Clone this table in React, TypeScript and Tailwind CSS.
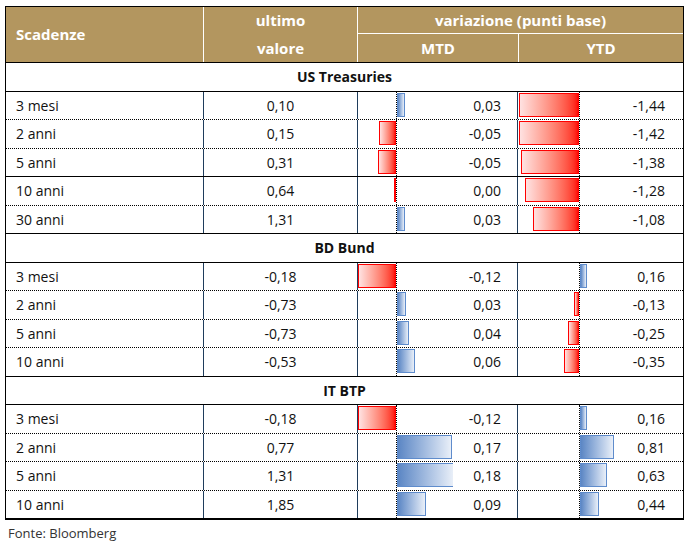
import React from "react";

type Row = {
  label: string;
  last: string;
  mtd: string;
  mtdW: number; // px, negative = red bar to the left of the axis
  ytd: string;
  ytdW: number;
  solid?: boolean;
  noEdge?: boolean;
};

type Group = { name: string; rows: Row[] };

const groups: Group[] = [
  {
    name: "US Treasuries",
    rows: [
      { label: "3 mesi", last: "0,10", mtd: "0,03", mtdW: 8, ytd: "-1,44", ytdW: -60 },
      { label: "2 anni", last: "0,15", mtd: "-0,05", mtdW: -17, ytd: "-1,42", ytdW: -60 },
      { label: "5 anni", last: "0,31", mtd: "-0,05", mtdW: -18, ytd: "-1,38", ytdW: -58, solid: true },
      { label: "10 anni", last: "0,64", mtd: "0,00", mtdW: -1, ytd: "-1,28", ytdW: -54 },
      { label: "30 anni", last: "1,31", mtd: "0,03", mtdW: 8, ytd: "-1,08", ytdW: -46 },
    ],
  },
  {
    name: "BD Bund",
    rows: [
      { label: "3 mesi", last: "-0,18", mtd: "-0,12", mtdW: -38, ytd: "0,16", ytdW: 7 },
      { label: "2 anni", last: "-0,73", mtd: "0,03", mtdW: 9, ytd: "-0,13", ytdW: -5 },
      { label: "5 anni", last: "-0,73", mtd: "0,04", mtdW: 12, ytd: "-0,25", ytdW: -11 },
      { label: "10 anni", last: "-0,53", mtd: "0,06", mtdW: 18, ytd: "-0,35", ytdW: -15 },
    ],
  },
  {
    name: "IT BTP",
    rows: [
      { label: "3 mesi", last: "-0,18", mtd: "-0,12", mtdW: -38, ytd: "0,16", ytdW: 7 },
      { label: "2 anni", last: "0,77", mtd: "0,17", mtdW: 55, ytd: "0,81", ytdW: 34 },
      { label: "5 anni", last: "1,31", mtd: "0,18", mtdW: 56, ytd: "0,63", ytdW: 27, noEdge: true },
      { label: "10 anni", last: "1,85", mtd: "0,09", mtdW: 29, ytd: "0,44", ytdW: 19 },
    ],
  },
];

// One variation cell: red bars grow left of the dotted axis, blue ones right.
function BarCell({ value, w, negSlot, pr, noEdge }: { value: string; w: number; negSlot: string; pr: string; noEdge?: boolean }) {
  return (
    <div className="flex h-full flex-1 items-stretch border-l border-[#1f3d5c]">
      <div className={`flex ${negSlot} shrink-0 items-start justify-end pt-px`}>
        {w < 0 && (
          <div
            className="h-[24px] border border-[#ff0000] bg-linear-to-r from-[#ffe2e2] to-[#ff0000]"
            style={{ width: -w }}
          />
        )}
      </div>
      <div className="border-l border-dotted border-black" />
      <div className="flex flex-1 items-start pt-px">
        {w > 0 && (
          <div
            className={`h-[24px] border border-[#5f8ccc] bg-linear-to-r from-[#5b86c4] to-[#e9eff8] ${noEdge ? "border-r-0" : ""}`}
            style={{ width: w }}
          />
        )}
      </div>
      <div className={`flex items-center ${pr}`}>{value}</div>
    </div>
  );
}

export default function App() {
  return (
    <div className="h-[546px] w-[688px] bg-white pl-[5px] pt-[6px] text-[14px] text-[#111]" style={{ fontFamily: '"Open Sans", "DejaVu Sans", sans-serif' }}>
      <div className="w-[679px] border border-black">
        <div className="flex h-[56px] border-b border-black bg-[#b3965f] text-[15px] font-bold text-white">
          <div className="flex w-[197px] items-center pl-[10px]">Scadenze</div>
          <div className="flex w-[154px] flex-col border-l border-white">
            <div className="flex h-[27px] items-center justify-center">ultimo</div>
            <div className="flex h-[28px] items-center justify-center">valore</div>
          </div>
          <div className="flex flex-1 flex-col border-l border-white">
            <div className="flex h-[27px] items-center justify-center border-b border-white">variazione (punti base)</div>
            <div className="flex flex-1">
              <div className="flex w-[160px] items-center justify-center">MTD</div>
              <div className="flex flex-1 items-center justify-center border-l border-white">YTD</div>
            </div>
          </div>
        </div>
        {groups.map((g) => (
          <div key={g.name}>
            <div className="flex h-[28.5px] items-center justify-center border-b border-black font-bold">{g.name}</div>
            {g.rows.map((r, ri) => {
              const last = ri === g.rows.length - 1;
              const border = last || r.solid ? "border-solid" : "border-dotted";
              return (
                <div key={r.label + ri} className={`flex h-[28.5px] border-b border-black ${border}`}>
                  <div className="flex w-[197px] items-center pl-[10px]">{r.label}</div>
                  <div className="flex w-[154px] items-center justify-center border-l border-[#1f3d5c]">{r.last}</div>
                  <div className="flex w-[160px]">
                    <BarCell value={r.mtd} w={r.mtdW} negSlot="w-[38px]" pr="pr-[16px]" noEdge={r.noEdge} />
                  </div>
                  <div className="flex flex-1">
                    <BarCell value={r.ytd} w={r.ytdW} negSlot="w-[61px]" pr="pr-[18px]" />
                  </div>
                </div>
              );
            })}
          </div>
        ))}
      </div>
      <div className="pl-[3px] pt-[4px] text-[13px] text-[#333]">Fonte: Bloomberg</div>
    </div>
  );
}
